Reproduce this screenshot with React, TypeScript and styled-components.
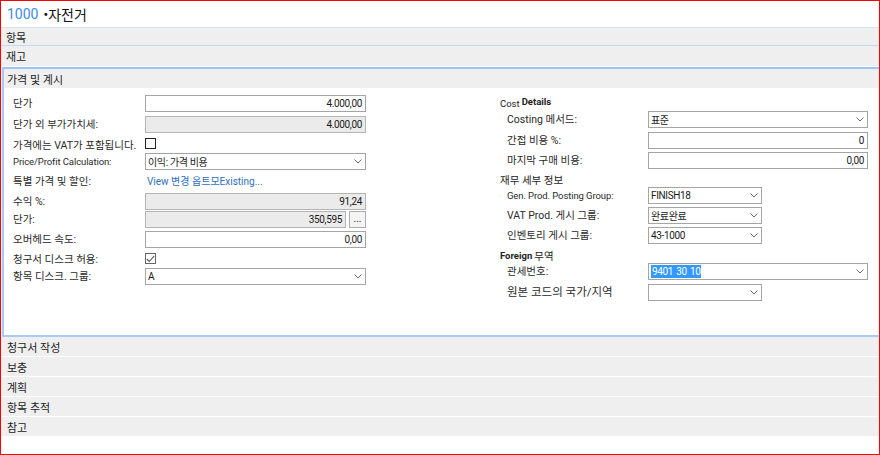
import * as React from 'react';
import styled, { createGlobalStyle } from 'styled-components';

const GlobalStyle = createGlobalStyle`
  html, body {
    margin: 0;
    padding: 0;
    background: #fff;
  }
  body {
    font-family: Roboto, "Noto Sans CJK KR", sans-serif;
    color: #1f1f1f;
  }
  * {
    box-sizing: border-box;
  }
`;

const Frame = styled.div`
  width: 880px;
  height: 455px;
  border: 1px solid #ff0000;
  background: #fff;
  overflow: hidden;
  display: flex;
  flex-direction: column;
`;

const Title = styled.div`
  height: 26px;
  padding-left: 6px;
  display: flex;
  align-items: center;
  gap: 5px;
  font-size: 14px;
  color: #111;
`;

const TitleNo = styled.span`
  color: #3a8de0;
`;

const TabHeader = styled.div<{ $line: string; $h: number }>`
  height: ${p => p.$h}px;
  border-top: 1px solid ${p => p.$line};
  background: #efefef;
  padding-left: 5px;
  display: flex;
  align-items: center;
  font-size: 11px;
  color: #222;
`;

const Section = styled.div`
  margin: 1px 0 0 1px;
  border-top: 2px solid #9ec4f3;
  border-left: 2px solid #a9caf3;
  border-bottom: 2px solid #a9caf3;
`;

const SectionHeader = styled.div`
  height: 19px;
  background: #efefef;
  padding-left: 3px;
  display: flex;
  align-items: center;
  font-size: 11px;
  color: #222;
`;

const SectionBody = styled.div`
  height: 247px;
  padding: 7px 0 0 9px;
  display: grid;
  grid-template-columns: 353px 368px;
  column-gap: 134px;
  align-items: start;
`;

const Column = styled.div`
  display: flex;
  flex-direction: column;
`;

const FieldRow = styled.div<{ $h: number }>`
  height: ${p => p.$h}px;
  display: flex;
  align-items: flex-start;
`;

const Label = styled.div<{ $w: number; $indent?: number; $size?: number }>`
  width: ${p => p.$w}px;
  flex: none;
  padding-left: ${p => p.$indent ?? 0}px;
  line-height: 17px;
  font-size: ${p => p.$size ?? 10.5}px;
  white-space: nowrap;
  color: #2a2a2a;
`;

const LatinLabel = styled.span`
  font-size: 9.5px;
  letter-spacing: -0.1px;
`;

const Box = styled.div<{ $w: number; $gray?: boolean; $right?: boolean }>`
  width: ${p => p.$w}px;
  height: 17px;
  flex: none;
  border: 1px solid ${p => (p.$gray ? '#b4b4b4' : '#a5a5a5')};
  background: ${p => (p.$gray ? '#ebebeb' : '#fff')};
  display: flex;
  align-items: center;
  justify-content: ${p => (p.$right ? 'flex-end' : 'flex-start')};
  padding: 0 3px 0 2px;
  font-size: 10px;
  letter-spacing: -0.35px;
  color: #1a1a1a;
  white-space: nowrap;
`;

const Chevron = styled.svg`
  margin-left: auto;
  flex: none;
`;

const Highlight = styled.span`
  background: #3399ff;
  color: #fff;
  padding: 1px 1px;
  word-spacing: 1px;
`;

const DotsButton = styled.div`
  width: 17px;
  height: 17px;
  margin-left: 3px;
  border: 1px solid #adadad;
  background: #f4f4f4;
  font-size: 10px;
  display: flex;
  align-items: flex-end;
  justify-content: center;
  padding-bottom: 3px;
  line-height: 1;
`;

const CheckBox = styled.span<{ $dark?: boolean }>`
  width: 11px;
  height: 11px;
  margin-top: ${p => (p.$dark ? 1 : 2)}px;
  border: 1px solid ${p => (p.$dark ? '#222' : '#666')};
  background: #fff;
  display: flex;
  align-items: center;
  justify-content: center;
`;

const Link = styled.div`
  line-height: 17px;
  padding-left: 2px;
  font-size: 10px;
  color: #2f6fbf;
  white-space: nowrap;
`;

const GroupHeading = styled.div<{ $h: number }>`
  height: ${p => p.$h}px;
  display: flex;
  align-items: center;
  gap: 2px;
  font-size: 10.5px;
  color: #222;
`;

const SmallText = styled.span`
  font-size: 9.5px;
`;

const RaisedBold = styled.span`
  font-size: 9.5px;
  font-weight: 700;
  margin-bottom: 4px;
`;

const BoldText = styled.span`
  font-size: 9.5px;
  font-weight: 700;
`;

const LowerList = styled.div`
  display: flex;
  flex-direction: column;
`;

const LowerTab = styled.div`
  height: 19px;
  background: #efefef;
  padding-left: 6px;
  display: flex;
  align-items: center;
  font-size: 11px;
  color: #222;
  & + & {
    margin-top: 1px;
  }
`;

const ChevronIcon = () => (
  <Chevron width="8" height="5" viewBox="0 0 8 5">
    <polyline points="0.5,0.5 4,4 7.5,0.5" fill="none" stroke="#6a6a6a" strokeWidth="1" />
  </Chevron>
);

const Select = ({ w, children }: { w: number; children?: React.ReactNode }) => (
  <Box $w={w}>
    {children}
    <ChevronIcon />
  </Box>
);

const Check = ({ checked }: { checked?: boolean }) => (
  <CheckBox $dark={!checked}>
    {checked && (
      <svg width="9" height="8" viewBox="0 0 9 8">
        <polyline points="0.8,4 3.3,6.5 8.2,0.8" fill="none" stroke="#555" strokeWidth="1.1" />
      </svg>
    )}
  </CheckBox>
);

const LEFT_LABEL = 132;
const RIGHT_LABEL = 148;

const LeftColumn = () => (
  <Column>
    <FieldRow $h={21}>
      <Label $w={LEFT_LABEL}>단가</Label>
      <Box $w={221} $right>4.000,00</Box>
    </FieldRow>
    <FieldRow $h={21}>
      <Label $w={LEFT_LABEL}>단가 외 부가가치세:</Label>
      <Box $w={221} $gray $right>4.000,00</Box>
    </FieldRow>
    <FieldRow $h={16}>
      <Label $w={LEFT_LABEL}>가격에는 VAT가 포함됩니다.</Label>
      <Check />
    </FieldRow>
    <FieldRow $h={20}>
      <Label $w={LEFT_LABEL}><LatinLabel>Price/Profit Calculation:</LatinLabel></Label>
      <Select w={221}>이익: 가격 비용</Select>
    </FieldRow>
    <FieldRow $h={20}>
      <Label $w={LEFT_LABEL}>특별 가격 및 할인:</Label>
      <Link>View 변경 옵트모Existing...</Link>
    </FieldRow>
    <FieldRow $h={18}>
      <Label $w={LEFT_LABEL}>수익 %:</Label>
      <Box $w={221} $gray $right>91,24</Box>
    </FieldRow>
    <FieldRow $h={20}>
      <Label $w={LEFT_LABEL}>단가:</Label>
      <Box $w={201} $gray $right>350,595</Box>
      <DotsButton>...</DotsButton>
    </FieldRow>
    <FieldRow $h={20}>
      <Label $w={LEFT_LABEL}>오버헤드 속도:</Label>
      <Box $w={221} $right>0,00</Box>
    </FieldRow>
    <FieldRow $h={17}>
      <Label $w={LEFT_LABEL}>청구서 디스크 허용:</Label>
      <Check checked />
    </FieldRow>
    <FieldRow $h={20}>
      <Label $w={LEFT_LABEL}>항목 디스크. 그룹:</Label>
      <Select w={221}>A</Select>
    </FieldRow>
  </Column>
);

const RightColumn = () => (
  <Column>
    <GroupHeading $h={16}>
      <SmallText>Cost</SmallText>
      <RaisedBold>Details</RaisedBold>
    </GroupHeading>
    <FieldRow $h={21}>
      <Label $w={RIGHT_LABEL} $indent={7}>Costing 메서드:</Label>
      <Select w={220}>표준</Select>
    </FieldRow>
    <FieldRow $h={20}>
      <Label $w={RIGHT_LABEL} $indent={7}>간접 비용 %:</Label>
      <Box $w={220} $right>0</Box>
    </FieldRow>
    <FieldRow $h={20}>
      <Label $w={RIGHT_LABEL} $indent={7}>마지막 구매 비용:</Label>
      <Box $w={220} $right>0,00</Box>
    </FieldRow>
    <GroupHeading $h={15}>재무 세부 정보</GroupHeading>
    <FieldRow $h={20}>
      <Label $w={RIGHT_LABEL} $indent={7}><LatinLabel>Gen. Prod. Posting Group:</LatinLabel></Label>
      <Select w={114}>FINISH18</Select>
    </FieldRow>
    <FieldRow $h={20}>
      <Label $w={RIGHT_LABEL} $indent={7}>VAT Prod. 게시 그룹:</Label>
      <Select w={114}>완료완료</Select>
    </FieldRow>
    <FieldRow $h={20}>
      <Label $w={RIGHT_LABEL} $indent={7}>인벤토리 게시 그룹:</Label>
      <Select w={114}>43-1000</Select>
    </FieldRow>
    <GroupHeading $h={16}>
      <BoldText>Foreign</BoldText>
      <span>무역</span>
    </GroupHeading>
    <FieldRow $h={21}>
      <Label $w={RIGHT_LABEL} $indent={7}>관세번호:</Label>
      <Select w={220}><Highlight>9401 30 10</Highlight></Select>
    </FieldRow>
    <FieldRow $h={20}>
      <Label $w={RIGHT_LABEL} $indent={7} $size={11.5}>원본 코드의 국가/지역</Label>
      <Select w={114} />
    </FieldRow>
  </Column>
);

export default function App() {
  const lower = ['청구서 작성', '보충', '계획', '항목 추적', '참고'];
  return (
    <>
      <GlobalStyle />
      <Frame>
        <Title>
          <TitleNo>1000</TitleNo>
          <span>•자전거</span>
        </Title>
        <TabHeader $line="#d4e3f6" $h={18}>항목</TabHeader>
        <TabHeader $line="#c6daf4" $h={21}>재고</TabHeader>
        <Section>
          <SectionHeader>가격 및 계시</SectionHeader>
          <SectionBody>
            <LeftColumn />
            <RightColumn />
          </SectionBody>
        </Section>
        <LowerList>
          {lower.map(name => (
            <LowerTab key={name}>{name}</LowerTab>
          ))}
        </LowerList>
      </Frame>
    </>
  );
}
